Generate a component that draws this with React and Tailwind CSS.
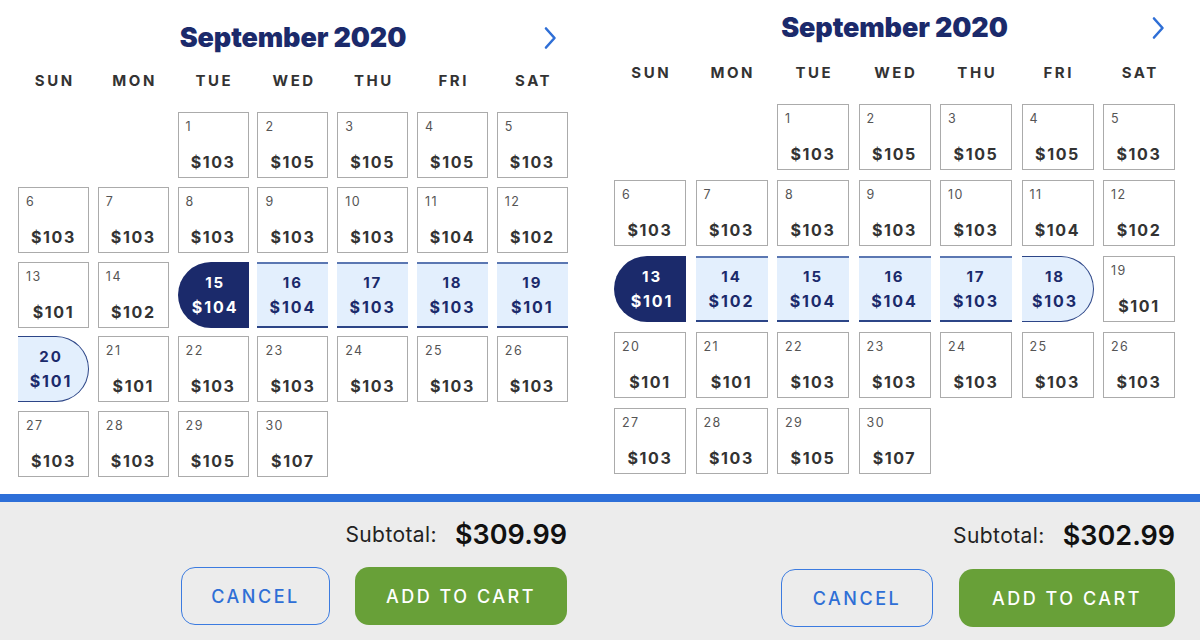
import React from 'react'

const PRICES = [103, 105, 105, 105, 103, 103, 103, 103, 103, 103, 104, 102, 101, 102, 104, 104, 103, 103, 101, 101, 101, 103, 103, 103, 103, 103, 103, 103, 105, 107]
const DAYS = ['SUN', 'MON', 'TUE', 'WED', 'THU', 'FRI', 'SAT']
const FONT = { fontFamily: 'Inter, "Noto Sans", sans-serif' }

function Chevron() {
  return (
    <svg width="14" height="24" viewBox="0 0 14 24" fill="none">
      <path d="M3 2.5 L11.5 12 L3 21.5" stroke="#2f6fd6" strokeWidth="2.6" strokeLinecap="round" strokeLinejoin="round" />
    </svg>
  )
}

function DayCell({ day, start, end }) {
  const price = '$' + PRICES[day - 1]
  if (day === start) {
    return (
      <div className="h-[66px] bg-[#1b2a6b] rounded-l-full flex flex-col items-center justify-center text-white font-bold tracking-[0.12em] leading-6 pl-1">
        <span className="text-[15px]">{day}</span>
        <span className="text-[16px]">{price}</span>
      </div>
    )
  }
  if (day > start && day < end) {
    return (
      <div className="h-[66px] bg-[#e3effd] border-t-2 border-b-2 border-t-[#5b77b2] border-b-[#2c4587] flex flex-col items-center justify-center text-[#1b2a6b] font-bold tracking-[0.12em] leading-6">
        <span className="text-[15px]">{day}</span>
        <span className="text-[16px]">{price}</span>
      </div>
    )
  }
  if (day === end) {
    return (
      <div className="h-[66px] bg-[#e3effd] border-[1.5px] border-l-0 border-[#2c4587] rounded-r-full flex flex-col items-center justify-center text-[#1b2a6b] font-bold tracking-[0.12em] leading-6 pr-1">
        <span className="text-[15px]">{day}</span>
        <span className="text-[16px]">{price}</span>
      </div>
    )
  }
  return (
    <div className="h-[66px] bg-white border-[1.5px] border-[#ababab] flex flex-col">
      <span className="pl-[7px] pt-[6px] text-[12.5px] leading-4 text-[#555] tracking-[0.12em]">{day}</span>
      <span className="mt-auto pb-[5px] text-center text-[16px] leading-5 font-bold text-[#333] tracking-[0.1em]">{price}</span>
    </div>
  )
}

function Panel({ p }) {
  const cells = [null, null]
  for (let d = 1; d <= 30; d++) cells.push(d)

  return (
    <div className="w-[600px] h-[640px] flex flex-col" style={FONT}>
      <div className={`h-[494px] bg-white ${p.pad}`}>
        <div className={`grid grid-cols-[1fr_auto_1fr] items-center ${p.titleRow}`}>
          <div />
          <h1 className="text-[27px] leading-8 font-black text-[#1b2a6b] tracking-[-0.005em]">September 2020</h1>
          <div className={`flex justify-end ${p.chevPad}`}>
            <Chevron />
          </div>
        </div>
        <div className={`grid ${p.cols} ${p.headRow}`}>
          {DAYS.map((d) => (
            <div key={d} className="text-center text-[15px] leading-5 font-bold text-[#333] tracking-[0.17em] pl-[0.17em]">
              {d}
            </div>
          ))}
        </div>
        <div className={`grid ${p.cols} ${p.rowGap}`}>
          {cells.map((d, i) => (d ? <DayCell key={i} day={d} start={p.start} end={p.end} /> : <div key={i} />))}
        </div>
      </div>
      <div className="h-2 bg-[#2d6fd8]" />
      <div className={`flex-1 bg-[#ececec] flex flex-col items-end ${p.footPad}`}>
        <div className="flex items-center h-8">
          <span className="text-[21px] text-[#222] mr-[18px] tracking-[0.02em]">Subtotal:</span>
          <span className="text-[27px] font-semibold text-[#111]">{p.total}</span>
        </div>
        <div className={`flex ${p.btnGap} ${p.btnTop}`}>
          <button className={`${p.cancelW} h-[58px] rounded-[14px] border-[1.5px] border-[#3b7be0] text-[#2f6fd6] text-[18px] font-medium tracking-[0.14em]`}>
            CANCEL
          </button>
          <button className={`${p.addW} h-[58px] rounded-[14px] bg-[#68a038] text-white text-[18px] font-medium tracking-[0.14em]`}>
            ADD TO CART
          </button>
        </div>
      </div>
    </div>
  )
}

const LEFT = {
  pad: 'pl-[18px] pr-[32px]',
  titleRow: 'pt-[22px]',
  chevPad: 'pr-[11px]',
  headRow: 'pt-[17px] pb-[21px]',
  cols: 'grid-cols-[repeat(7,71px)] gap-x-[8.8px]',
  rowGap: 'gap-y-[8.8px]',
  start: 15,
  end: 20,
  total: '$309.99',
  footPad: 'pr-[33px] pt-[17px]',
  btnTop: 'mt-[16px]',
  btnGap: 'gap-[25px]',
  cancelW: 'w-[149px]',
  addW: 'w-[212px]',
}

const RIGHT = {
  pad: 'pl-[14px] pr-[25px]',
  titleRow: 'pt-[12px]',
  chevPad: 'pr-[10px]',
  headRow: 'pt-[19px] pb-[21px]',
  cols: 'grid-cols-[repeat(7,72px)] gap-x-[9.5px]',
  rowGap: 'gap-y-[10px]',
  start: 13,
  end: 18,
  total: '$302.99',
  footPad: 'pr-[25px] pt-[18px]',
  btnTop: 'mt-[17px]',
  btnGap: 'gap-[26px]',
  cancelW: 'w-[152px]',
  addW: 'w-[216px]',
}

export default function App() {
  return (
    <div className="w-[1200px] h-[640px] flex overflow-hidden">
      <Panel p={LEFT} />
      <Panel p={RIGHT} />
    </div>
  )
}
